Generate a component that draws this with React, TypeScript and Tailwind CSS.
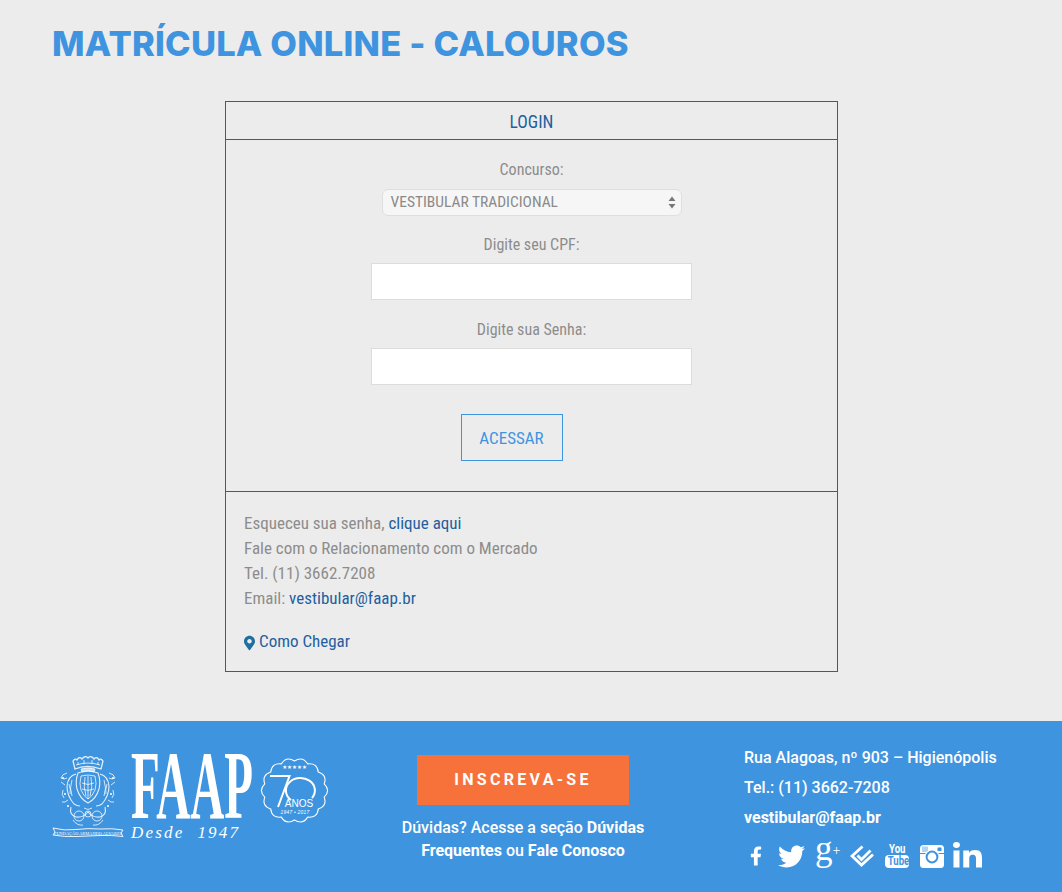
import React from "react";
import { FaFacebookF, FaTwitter, FaLinkedinIn, FaMapMarkerAlt } from "react-icons/fa";

const roboto = { fontFamily: "Roboto, 'Liberation Sans', sans-serif" };
const serif = { fontFamily: "'Liberation Serif', serif" };

function Crest() {
  return (
    <svg width="56" height="72" viewBox="0 0 56 72" fill="none" stroke="#fff" strokeWidth="0.9" strokeOpacity="0.85" className="block">
      <path d="M13 5 q2 -3 4 -1 q2 -4 5 -1 q3 -4 6 -1 q3 -3 6 1 q3 -3 5 1 q2 -2 4 1 l-2 8 q-14 -5 -26 0Z" strokeWidth="1.3" />
      <path d="M16 9 q12 -4 24 0 M18 6 v3 M24 4 v4 M32 4 v4 M38 6 v3" />
      <path d="M21 13 q7 -2 14 0 l-1 3 q-6 -2 -12 0Z" fill="#fff" fillOpacity="0.7" />
      <path d="M18 17 q10 -4 20 0 q3 8 1 16 q-3 10 -11 14 q-8 -4 -11 -14 q-2 -8 1 -16Z" strokeWidth="1.1" />
      <path d="M21 20 q7 -2 14 0 q2 8 0 14 q-3 7 -7 9 q-4 -2 -7 -9 q-2 -6 0 -14Z" />
      <path d="M25 21 q-2 10 1 19 M28 20 v23 M31 21 q2 10 -1 19 M22 27 q6 3 12 0 M22 33 q6 3 12 0" />
      <path d="M16 18 q-8 2 -9 12 q0 10 7 18 q3 2 6 2 M40 18 q8 2 9 12 q0 10 -7 18 q-3 2 -6 2" strokeWidth="1.1" />
      <path d="M12 24 q-3 8 0 16 M44 24 q3 8 0 16 M9 28 q2 6 1 10 M47 28 q-2 6 -1 10" />
      <path d="M7 17 q-5 1 -6 5 q3 2 6 0 M49 17 q5 1 6 5 q-3 2 -6 0 M3 34 q-2 5 1 8 M53 34 q2 5 -1 8 M1 26 l4 3 M55 26 l-4 3" />
      <path d="M8 44 q-3 3 -6 2 M48 44 q3 3 6 2" />
      <path d="M11 51 q-2 8 5 10 q7 1 12 -5 q5 6 12 5 q7 -2 5 -10" strokeWidth="1.1" />
      <circle cx="19" cy="60" r="5" />
      <circle cx="37" cy="60" r="5" />
      <circle cx="28" cy="58" r="3" />
      <path d="M13 64 q4 6 10 5 M43 64 q-4 6 -10 5 M24 52 q4 3 8 0" />
      <g fill="#fff" stroke="none">
        <circle cx="3" cy="22" r="1" /><circle cx="53" cy="22" r="1" /><circle cx="5" cy="38" r="1" /><circle cx="51" cy="38" r="1" /><circle cx="8" cy="50" r="1" /><circle cx="48" cy="50" r="1" />
      </g>
    </svg>
  );
}

function Banner() {
  return (
    <svg width="72" height="11" viewBox="0 0 72 11" className="block">
      <path d="M1 1 Q12 4 24 2.5 T48 2 Q60 1 71 3 L69 6 L71 9.5 Q60 8 48 8.5 T24 9.5 Q12 10 1 8 L3 5Z" fill="none" stroke="#fff" strokeWidth="0.9" />
      <text x="36" y="7.6" textAnchor="middle" fontSize="4.4" fill="#fff" style={serif}>FUNDAÇÃO ARMANDO ALVARES</text>
    </svg>
  );
}

function Badge() {
  const n = 14;
  let d = "";
  for (let i = 0; i < n; i++) {
    const a0 = (i / n) * Math.PI * 2 - Math.PI / 2;
    const a1 = ((i + 0.5) / n) * Math.PI * 2 - Math.PI / 2;
    const a2 = ((i + 1) / n) * Math.PI * 2 - Math.PI / 2;
    const p0 = [34.5 + 30.5 * Math.cos(a0), 33.5 + 29.5 * Math.sin(a0)];
    const c = [34.5 + 36.5 * Math.cos(a1), 33.5 + 35.5 * Math.sin(a1)];
    const p2 = [34.5 + 30.5 * Math.cos(a2), 33.5 + 29.5 * Math.sin(a2)];
    if (i === 0) d += `M${p0[0].toFixed(1)} ${p0[1].toFixed(1)}`;
    d += `Q${c[0].toFixed(1)} ${c[1].toFixed(1)} ${p2[0].toFixed(1)} ${p2[1].toFixed(1)}`;
  }
  return (
    <svg width="69" height="67" viewBox="0 0 69 67" fill="none" className="block">
      <path d={d} stroke="#fff" strokeWidth="1.1" />
      <text x="34.5" y="11.5" textAnchor="middle" fill="#fff" fontSize="5.5" fontFamily="'DejaVu Sans', sans-serif">★★★★★</text>
      <path d="M10 19 H29.5 L18 50" stroke="#fff" strokeWidth="2" fill="none" />
      <path d="M31 43 A14.5 12.5 0 1 1 52 41" stroke="#fff" strokeWidth="2" fill="none" />
      <text x="39" y="50" textAnchor="middle" fill="#fff" fontSize="10" fontFamily="'Liberation Sans', sans-serif">ANOS</text>
      <text x="35" y="56.5" textAnchor="middle" fill="#fff" fontSize="4.8" fontStyle="italic" fontFamily="'Liberation Sans', sans-serif" letterSpacing="0.3">1947 • 2017</text>
    </svg>
  );
}

function Logo() {
  return (
    <div className="flex items-start">
      <div className="flex flex-col items-center w-[72px] mt-[35px]">
        <Crest />
        <div className="mt-[-1px]"><Banner /></div>
      </div>
      <div className="ml-[7px] mt-[33px] w-[121px]">
        <div className="h-[64px] w-[121px]">
          <div className="text-white text-[97px] leading-[64px] font-bold whitespace-nowrap origin-top-left scale-x-[0.485]" style={serif}>FAAP</div>
        </div>
        <div className="mt-[8px] text-white text-[17px] leading-[14px] italic tracking-[2.2px] whitespace-nowrap" style={serif}>Desde&nbsp;&nbsp;1947</div>
      </div>
      <div className="ml-[8px] mt-[36px]"><Badge /></div>
    </div>
  );
}

function Foursquare() {
  return (
    <svg width="24" height="22" viewBox="0 0 24 22" className="block" fill="none" stroke="#fff" strokeWidth="2.8">
      <path d="M12.5 1.5 L2 11 L11.5 20 L23 9.5" />
      <path d="M7.5 10.5 L11.5 14.5 L20.5 5.5" />
    </svg>
  );
}

function YouTube() {
  return (
    <div className="flex flex-col items-center w-[24px] text-white" style={{ fontFamily: "Roboto, sans-serif" }}>
      <div className="text-[12px] leading-[10px] font-bold scale-x-[0.8]">You</div>
      <div className="bg-white rounded-[4px] w-[24px] h-[13px] mt-[1px] text-[12px] leading-[13px] font-bold text-center text-[#3f94e0]"><span className="inline-block scale-x-[0.8]">Tube</span></div>
    </div>
  );
}

function Instagram() {
  return (
    <svg width="24" height="23" viewBox="0 0 24 23" className="block">
      <rect x="0" y="0" width="24" height="23" rx="3.5" fill="#fff" />
      <path d="M0 8.5 H24" stroke="#3f94e0" strokeWidth="1" />
      <path d="M3 1.5 V7 M5 1.5 V7 M7 1.5 V7" stroke="#3f94e0" strokeWidth="0.8" />
      <rect x="17.5" y="2.5" width="4" height="3.5" rx="0.6" fill="#3f94e0" />
      <circle cx="12" cy="12" r="7.5" fill="#fff" />
      <circle cx="12" cy="12" r="5.4" fill="none" stroke="#3f94e0" strokeWidth="2" />
    </svg>
  );
}

function Field({ label, mt }: { label: string; mt: string }) {
  return (
    <>
      <label className={`${mt} text-[16px] leading-[20px] text-[#8c8c8c] text-center`}>{label}</label>
      <input type="text" className="mt-[8px] w-[321px] h-[37px] bg-white border border-[#dcdcdc] outline-none" />
    </>
  );
}

export default function App() {
  return (
    <div className="min-h-[892px] w-full bg-[#ececec] flex flex-col" style={roboto}>
      <h1 className="pl-[52px] pt-[19px] h-[101px] text-[34.5px] leading-[50px] font-extrabold text-[#3f94e0] tracking-[0.2px] whitespace-nowrap" style={{ fontFamily: "Inter, sans-serif" }}>
        MATRÍCULA ONLINE - CALOUROS
      </h1>

      <main className="w-[613px] h-[571px] ml-[225px] border border-[#4a5a68] flex flex-col [font-stretch:85.5%]">
        <div className="h-[38px] shrink-0 border-b border-[#4a5a68] text-center text-[17.5px] leading-[40px] text-[#1f5f9f]">LOGIN</div>

        <form className="h-[352px] shrink-0 border-b border-[#4a5a68] flex flex-col items-center pt-[20px]">
          <label className="text-[16px] leading-[20px] text-[#8c8c8c]">Concurso:</label>
          <div className="mt-[9px] w-[300px] h-[27px] rounded-[6px] border border-[#dfdfdf] bg-[#f6f6f6] flex items-center justify-between pl-[8px] pr-[5px]">
            <span className="text-[15.5px] text-[#8a8a8a] leading-[27px]">VESTIBULAR TRADICIONAL</span>
            <svg width="8" height="13" viewBox="0 0 8 13" className="block"><path d="M4 0.5L7.5 5H0.5Z M4 12.5L0.5 8H7.5Z" fill="#777" /></svg>
          </div>
          <Field label="Digite seu CPF:" mt="mt-[19px]" />
          <Field label="Digite sua Senha:" mt="mt-[20px]" />
          <button type="button" className="mt-[29px] ml-[-40px] w-[102px] h-[47px] border border-[#3f94e0] text-[#3f94e0] text-[17px] leading-[47px] text-center">ACESSAR</button>
        </form>

        <div className="pl-[18px] pt-[19px] text-[17px] leading-[25px] text-[#8c8c8c]">
          <p>Esqueceu sua senha, <a className="text-[#1f5f9f]">clique aqui</a></p>
          <p>Fale com o Relacionamento com o Mercado</p>
          <p>Tel. (11) 3662.7208</p>
          <p>Email: <a className="text-[#1f5f9f]">vestibular@faap.br</a></p>
          <p className="mt-[18px] flex items-center gap-[4px] text-[#1f5f9f]">
            <FaMapMarkerAlt className="w-[11px] h-[16px] text-[#1f6f9f] mt-[3px]" />
            <a>Como Chegar</a>
          </p>
        </div>
      </main>

      <footer className="mt-[49px] h-[171px] bg-[#3f94e0] flex items-start text-white">
        <div className="pl-[52px] w-[417px] shrink-0"><Logo /></div>
        <div className="w-[212px] shrink-0 flex flex-col items-center pt-[34px]">
          <a className="w-[212px] h-[50px] bg-[#f6723a] text-center text-[16px] leading-[50px] font-bold tracking-[3.3px]">INSCREVA-SE</a>
          <p className="mt-[11px] w-[260px] text-center text-[16px] leading-[23px] font-medium whitespace-nowrap">
            Dúvidas? Acesse a seção <b className="font-bold">Dúvidas</b><br />
            <b className="font-bold">Frequentes</b> ou <b className="font-bold">Fale Conosco</b>
          </p>
        </div>
        <div className="ml-[115px] pt-[25px]">
          <p className="text-[16px] leading-[24px] font-medium whitespace-nowrap">Rua Alagoas, nº 903 – Higienópolis</p>
          <p className="mt-[6px] text-[16px] leading-[24px] font-medium">Tel.: (11) 3662-7208</p>
          <p className="mt-[6px] text-[16px] leading-[24px] font-bold">vestibular@faap.br</p>
          <div className="mt-[11px] flex items-center h-[30px]">
            <FaFacebookF className="ml-[6px] w-[12px] h-[22px]" />
            <FaTwitter className="ml-[16px] w-[27px] h-[27px]" />
            <div className="ml-[10px] w-[23px] h-[26px] flex items-start" style={serif}>
              <span className="mt-[-7px] text-[35px] leading-[26px]">g</span>
              <span className="text-[14px] leading-[16px]">+</span>
            </div>
            <div className="ml-[12px]"><Foursquare /></div>
            <div className="ml-[11px]"><YouTube /></div>
            <div className="ml-[11px]"><Instagram /></div>
            <FaLinkedinIn className="ml-[9px] w-[29px] h-[29px]" preserveAspectRatio="none" />
          </div>
        </div>
      </footer>
    </div>
  );
}
